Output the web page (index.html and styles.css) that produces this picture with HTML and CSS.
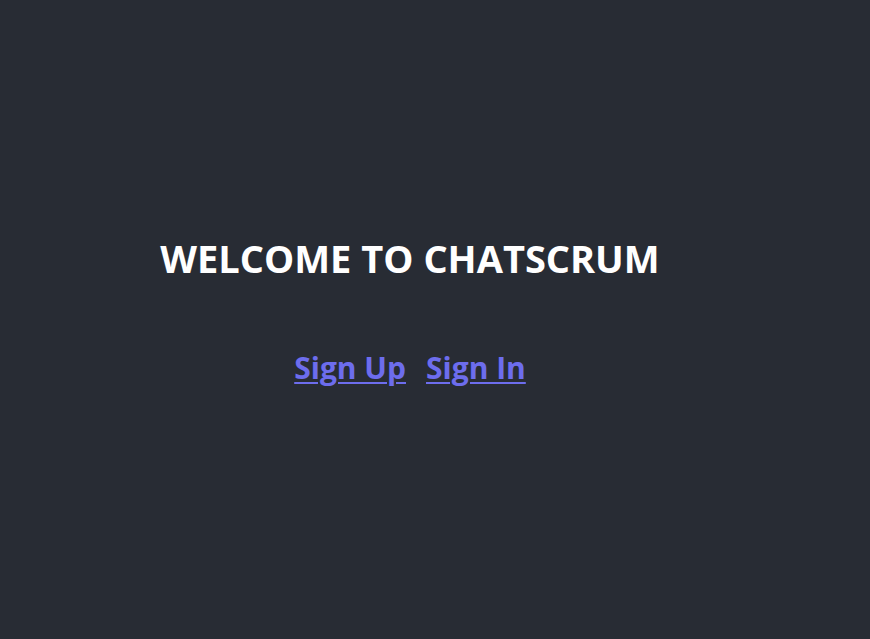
FILE: index.html
```html
<!DOCTYPE html>
<html>
<head>
<meta charset="utf-8">
<link rel="stylesheet" href="styles.css">
</head>
<body>
<div class="app">
  <h1 class="title">WELCOME TO CHATSCRUM</h1>
  <nav class="links">
    <a href="#" class="link">Sign Up</a>
    <a href="#" class="link">Sign In</a>
  </nav>
</div>
</body>
</html>
```
FILE: styles.css
```css
html, body {
  margin: 0;
  padding: 0;
  height: 100%;
  background: #282c34;
}
body {
  font-family: "Open Sans", "Noto Sans", sans-serif;
}
.app {
  box-sizing: border-box;
  height: 100%;
  padding-right: 50px;
  padding-top: 235px;
  display: flex;
  flex-direction: column;
  align-items: center;
}
.title {
  margin: 0;
  color: #ffffff;
  font-size: 38px;
  font-weight: 700;
  line-height: 46px;
}
.links {
  margin-top: 67px;
  display: flex;
  gap: 20px;
}
.link {
  color: #6d6ded;
  font-size: 30px;
  font-weight: 700;
  line-height: 40px;
  text-decoration-thickness: 2px;
  text-underline-offset: 3px;
}
```
